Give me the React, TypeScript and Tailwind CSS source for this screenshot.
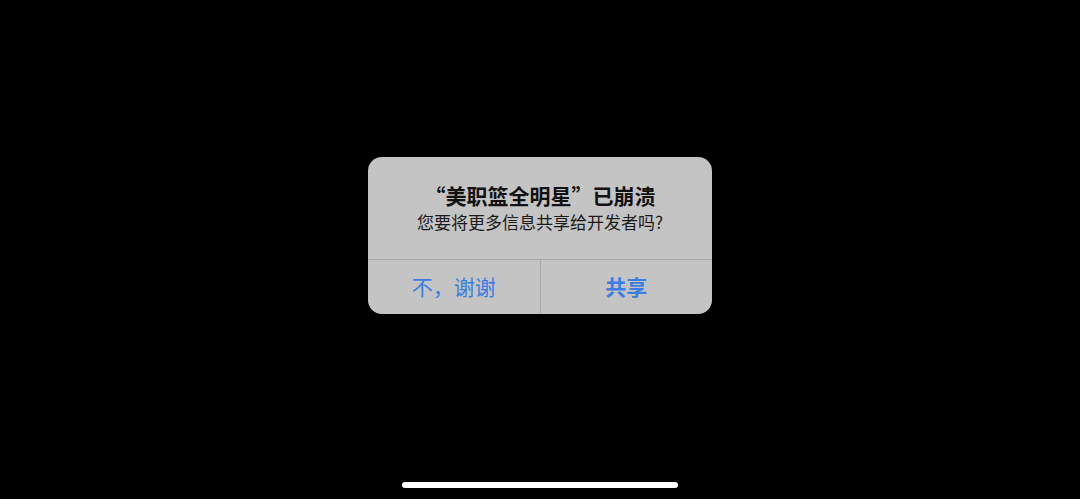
export default function App() {
  return (
    <div
      className="w-[1080px] h-[499px] bg-black flex flex-col items-center"
      style={{ fontFamily: '"Noto Sans CJK SC", "Noto Sans", sans-serif' }}
    >
      <div className="mt-[157px] w-[344px] h-[157px] bg-[#c4c4c4] rounded-[14px] flex flex-col overflow-hidden">
        <div className="h-[102px] flex flex-col items-center pt-[24px]">
          <div className="text-[21px] leading-[28px] font-bold text-[#111]">“美职篮全明星”已崩溃</div>
          <div className="mt-[2px] text-[17px] leading-[22px] text-[#1a1a1a]">您要将更多信息共享给开发者吗?</div>
        </div>
        <div className="h-px bg-[#a9a9a9]" />
        <div className="flex-1 flex">
          <div className="flex-1 flex items-center justify-center text-[21px] text-[#3b7ee3]">不，谢谢</div>
          <div className="w-px bg-[#a9a9a9]" />
          <div className="flex-1 flex items-center justify-center text-[21px] font-semibold text-[#3b7ee3]">共享</div>
        </div>
      </div>
      <div className="flex-1" />
      <div className="w-[276px] h-[6px] rounded-full bg-white mb-[11px]" />
    </div>
  );
}
